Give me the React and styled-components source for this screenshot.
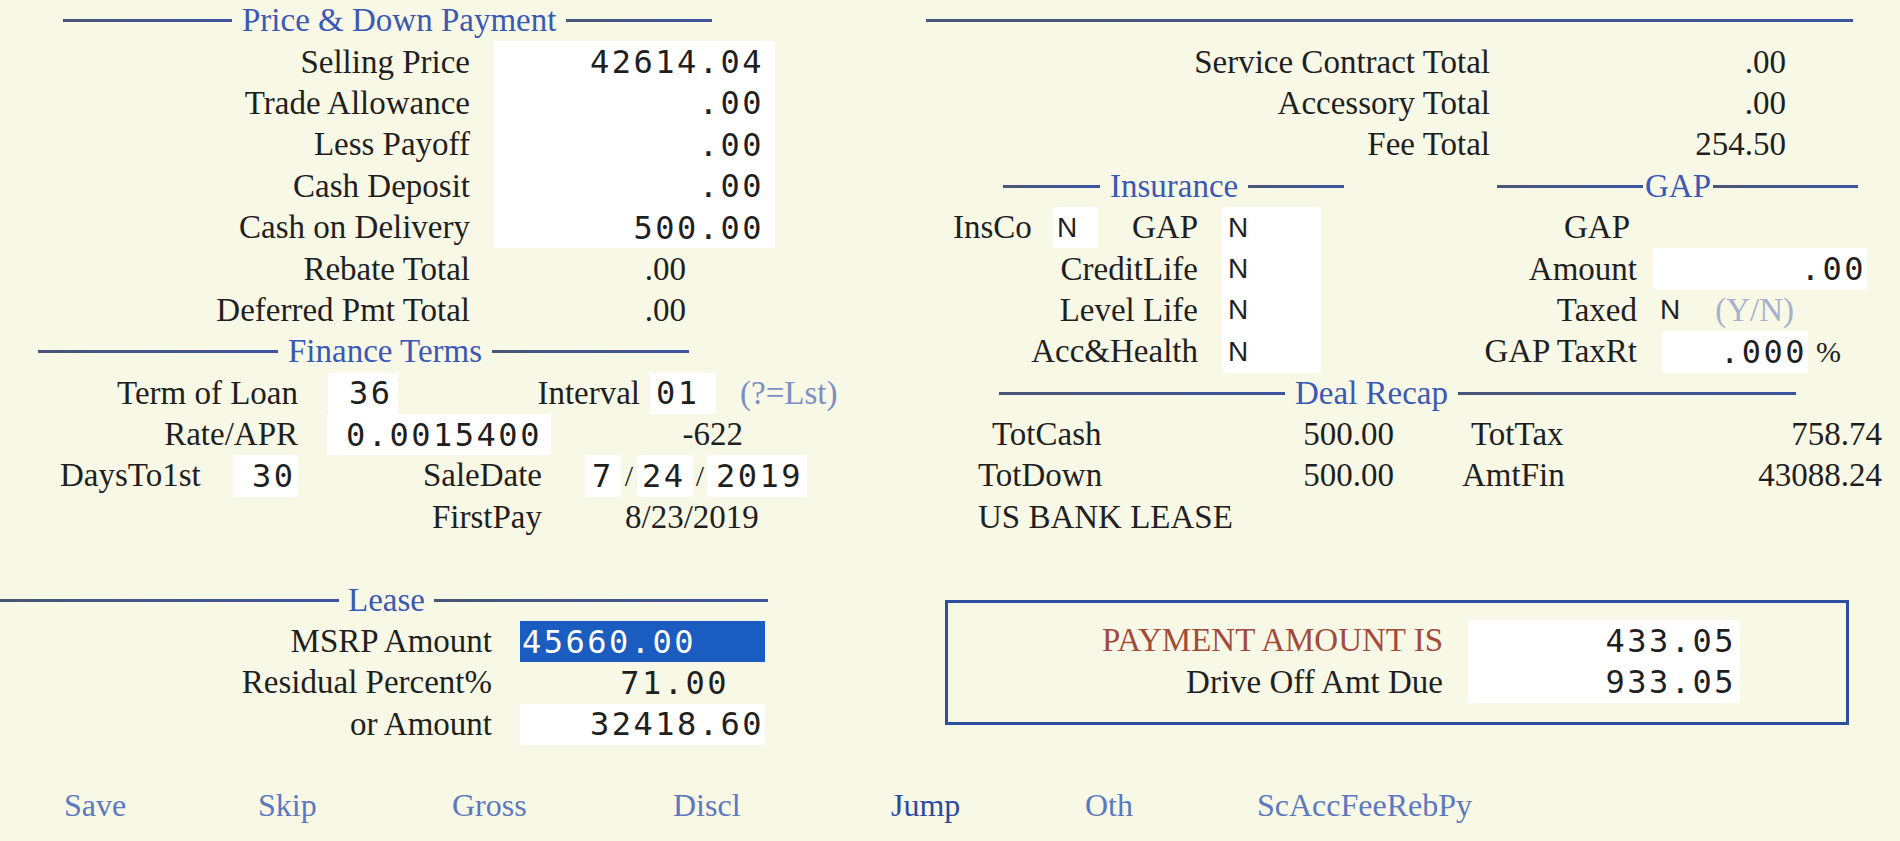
import React from 'react';
import styled, { createGlobalStyle } from 'styled-components';

const ROW = 41.4;

const GlobalStyle = createGlobalStyle`
  html, body {
    margin: 0;
    padding: 0;
    background: #F8F8E6;
  }
  body {
    width: 1900px;
    height: 841px;
    overflow: hidden;
  }
`;

const Screen = styled.div`
  width: 1900px;
  height: 841px;
  background: #F8F8E6;
  font-family: "Liberation Serif", "Times New Roman", serif;
  font-size: 33px;
  color: #1f1f1f;
  display: flex;
  flex-direction: column;
`;

const Panels = styled.div`
  display: grid;
  grid-template-columns: 900px 1000px;
`;

const Column = styled.div`
  display: flex;
  flex-direction: column;
`;

const Split = styled.div`
  display: grid;
  grid-template-columns: 570px 430px;
`;

const Row = styled.div`
  display: flex;
  align-items: center;
  height: ${ROW}px;
  padding-left: ${p => p.$indent || 0}px;
  white-space: nowrap;
`;

const Heading = styled(Row)`
  color: #3B58B4;
`;

const Rule = styled.span`
  flex: none;
  width: ${p => p.$w}px;
  height: 3px;
  background: linear-gradient(90deg, #4a5677, #3d55a0);
`;

const Title = styled.span`
  margin: 0 ${p => p.$gap ?? 10}px;
  line-height: 1;
`;

const Label = styled.div`
  flex: none;
  width: ${p => p.$w}px;
  margin-left: ${p => p.$gap || 0}px;
  padding-left: ${p => p.$pl || 0}px;
  box-sizing: border-box;
  text-align: ${p => (p.$left ? 'left' : 'right')};
  color: ${p => p.$tone || 'inherit'};
`;

const Amount = styled(Label)``;

const Field = styled.div`
  flex: none;
  align-self: stretch;
  display: flex;
  align-items: center;
  justify-content: ${p => (p.$left ? 'flex-start' : 'flex-end')};
  width: ${p => p.$w}px;
  margin-left: ${p => p.$gap || 0}px;
  padding: 0 ${p => p.$pr || 0}px 0 ${p => p.$pl || 0}px;
  box-sizing: border-box;
  background: ${p => (p.$bare ? 'transparent' : p.$selected ? '#1B5CC0' : '#FFFFFF')};
  color: ${p => (p.$selected ? '#FFFFFF' : '#1f1f1f')};
  font-family: "DejaVu Sans Mono", "Liberation Mono", monospace;
  font-size: 32px;
  letter-spacing: 2.5px;
`;

const Slash = styled.span`
  flex: none;
  width: ${p => p.$w}px;
  text-align: center;
  font-size: 30px;
`;

const Flag = styled.div`
  flex: none;
  align-self: stretch;
  display: flex;
  align-items: center;
  width: ${p => (p.$w ? `${p.$w}px` : 'auto')};
  margin-left: ${p => p.$gap || 0}px;
  padding-left: ${p => p.$pl || 0}px;
  box-sizing: border-box;
  background: ${p => (p.$bare ? 'transparent' : '#FFFFFF')};
  font-family: "Liberation Sans", Arial, sans-serif;
  font-size: 28px;
`;

const Hint = styled.span`
  margin-left: ${p => p.$gap || 0}px;
  color: ${p => p.$tone || '#7B8FC4'};
`;

const Percent = styled.span`
  margin-left: 8px;
  font-size: 30px;
`;

const PaymentBox = styled.div`
  margin: 62px 0 0 45px;
  width: 904px;
  box-sizing: border-box;
  border: 3px solid #2C4F9E;
  padding: 17px 0 19px;
`;

const ActionBar = styled.div`
  display: flex;
  align-items: center;
  height: ${ROW}px;
  margin-top: 40px;
  padding-left: 64px;
`;

const Action = styled.button`
  flex: none;
  width: ${p => (p.$w ? `${p.$w}px` : 'auto')};
  padding: 0;
  border: none;
  background: none;
  text-align: left;
  font-family: "Liberation Serif", "Times New Roman", serif;
  font-size: 32px;
  color: ${p => (p.$active ? '#2B4A9E' : '#5D78BD')};
  cursor: pointer;
`;

function Section({ indent, left, right, gap, children }) {
  return (
    <Heading $indent={indent}>
      <Rule $w={left} />
      <Title $gap={gap}>{children}</Title>
      <Rule $w={right} />
    </Heading>
  );
}

const priceRows = [
  ['Selling Price', '42614.04'],
  ['Trade Allowance', '.00'],
  ['Less Payoff', '.00'],
  ['Cash Deposit', '.00'],
  ['Cash on Delivery', '500.00'],
];

const feeRows = [
  ['Service Contract Total', '.00'],
  ['Accessory Total', '.00'],
  ['Fee Total', '254.50'],
];

const actions = [
  ['Save', 194],
  ['Skip', 194],
  ['Gross', 221],
  ['Discl', 218],
  ['Jump', 194, true],
  ['Oth', 172],
  ['ScAccFeeRebPy'],
];

export default function App() {
  return (
    <Screen>
      <GlobalStyle />
      <Panels>
        <Column>
          <Section indent={63} left={169} right={146}>Price &amp; Down Payment</Section>
          {priceRows.map(([label, value]) => (
            <Row key={label}>
              <Label $w={470}>{label}</Label>
              <Field $w={281} $gap={24} $pr={11}>{value}</Field>
            </Row>
          ))}
          <Row>
            <Label $w={470}>Rebate Total</Label>
            <Amount $w={216}>.00</Amount>
          </Row>
          <Row>
            <Label $w={470}>Deferred Pmt Total</Label>
            <Amount $w={216}>.00</Amount>
          </Row>

          <Section indent={38} left={240} right={197}>Finance Terms</Section>
          <Row>
            <Label $w={298}>Term of Loan</Label>
            <Field $w={70} $gap={30} $pl={21} $left>36</Field>
            <Label $w={242}>Interval</Label>
            <Field $w={66} $gap={10} $pl={6} $left>01</Field>
            <Hint $gap={24}>(?=Lst)</Hint>
          </Row>
          <Row>
            <Label $w={298}>Rate/APR</Label>
            <Field $w={224} $gap={29} $pl={19} $left>0.0015400</Field>
            <Amount $w={192}>-622</Amount>
          </Row>
          <Row $indent={60}>
            <Label $w={173} $left>DaysTo1st</Label>
            <Field $w={65} $pl={19} $left>30</Field>
            <Label $w={244}>SaleDate</Label>
            <Field $w={36} $gap={43} $pl={7} $left>7</Field>
            <Slash $w={16}>/</Slash>
            <Field $w={56} $pl={5} $left>24</Field>
            <Slash $w={14}>/</Slash>
            <Field $w={100} $pl={9} $left>2019</Field>
          </Row>
          <Row>
            <Label $w={542}>FirstPay</Label>
            <Amount $w={200} $gap={83} $left>8/23/2019</Amount>
          </Row>
          <Row />

          <Section indent={0} left={339} right={334} gap={9}>Lease</Section>
          <Row>
            <Label $w={492}>MSRP Amount</Label>
            <Field $w={245} $gap={28} $pl={2} $left $selected>45660.00</Field>
          </Row>
          <Row>
            <Label $w={492}>Residual Percent%</Label>
            <Field $w={245} $gap={28} $pr={36} $bare>71.00</Field>
          </Row>
          <Row>
            <Label $w={492}>or Amount</Label>
            <Field $w={245} $gap={28} $pr={1}>32418.60</Field>
          </Row>
        </Column>

        <Column>
          <Row $indent={26}>
            <Rule $w={927} />
          </Row>
          {feeRows.map(([label, value]) => (
            <Row key={label}>
              <Label $w={590}>{label}</Label>
              <Amount $w={296}>{value}</Amount>
            </Row>
          ))}

          <Split>
            <Column>
              <Section indent={103} left={97} right={96}>Insurance</Section>
              <Row $indent={53}>
                <Label $w={100} $left>InsCo</Label>
                <Flag $w={45} $pl={4}>N</Flag>
                <Label $w={100}>GAP</Label>
                <Flag $w={99} $gap={24} $pl={6}>N</Flag>
              </Row>
              {['CreditLife', 'Level Life', 'Acc&Health'].map(label => (
                <Row key={label}>
                  <Label $w={298}>{label}</Label>
                  <Flag $w={99} $gap={24} $pl={6}>N</Flag>
                </Row>
              ))}
            </Column>
            <Column>
              <Section indent={27} left={146} right={145} gap={2}>GAP</Section>
              <Row>
                <Label $w={160}>GAP</Label>
              </Row>
              <Row>
                <Label $w={167}>Amount</Label>
                <Field $w={214} $gap={16} $pr={1}>.00</Field>
              </Row>
              <Row>
                <Label $w={167}>Taxed</Label>
                <Flag $gap={23} $bare>N</Flag>
                <Hint $gap={35} $tone="#A7B1C9">(Y/N)</Hint>
              </Row>
              <Row>
                <Label $w={167}>GAP TaxRt</Label>
                <Field $w={146} $gap={25} $pr={1}>.000</Field>
                <Percent>%</Percent>
              </Row>
            </Column>
          </Split>

          <Section indent={99} left={286} right={338}>Deal Recap</Section>
          <Row $indent={78}>
            <Label $w={250} $pl={14} $left>TotCash</Label>
            <Amount $w={166}>500.00</Amount>
            <Label $w={250} $gap={68} $pl={9} $left>TotTax</Label>
            <Amount $w={170}>758.74</Amount>
          </Row>
          <Row $indent={78}>
            <Label $w={250} $left>TotDown</Label>
            <Amount $w={166}>500.00</Amount>
            <Label $w={250} $gap={68} $left>AmtFin</Label>
            <Amount $w={170}>43088.24</Amount>
          </Row>
          <Row $indent={78}>
            <Label $w={400} $left>US BANK LEASE</Label>
          </Row>

          <PaymentBox>
            <Row>
              <Label $w={495} $tone="#A24A3C">PAYMENT AMOUNT IS</Label>
              <Field $w={272} $gap={25} $pr={4}>433.05</Field>
            </Row>
            <Row>
              <Label $w={495}>Drive Off Amt Due</Label>
              <Field $w={272} $gap={25} $pr={4}>933.05</Field>
            </Row>
          </PaymentBox>
        </Column>
      </Panels>

      <ActionBar>
        {actions.map(([name, w, active]) => (
          <Action key={name} $w={w} $active={active}>{name}</Action>
        ))}
      </ActionBar>
    </Screen>
  );
}
